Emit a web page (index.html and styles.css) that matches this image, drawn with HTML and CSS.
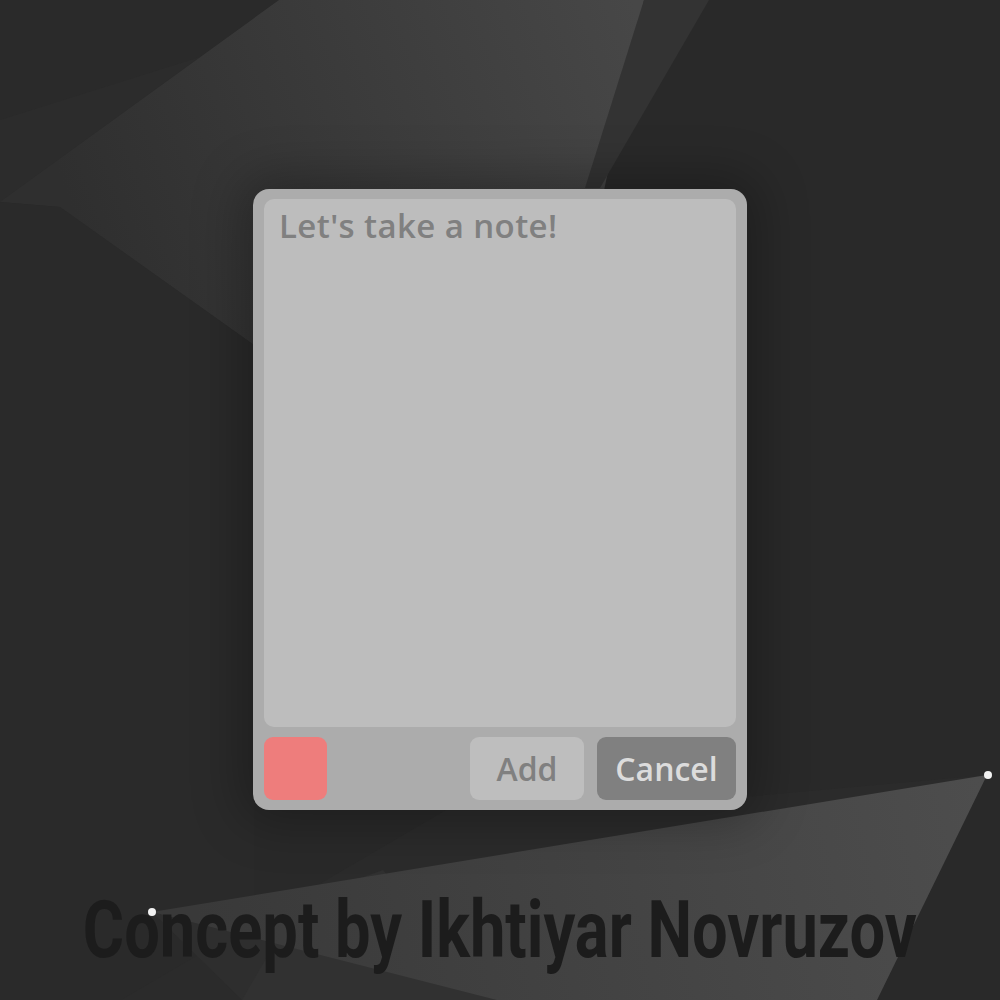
FILE: index.html
```html
<!DOCTYPE html>
<html lang="en">
<head>
<meta charset="utf-8">
<title>Note</title>
<link rel="stylesheet" href="styles.css">
</head>
<body>
<div class="stage">
  <svg class="bg" width="1000" height="1000" viewBox="0 0 1000 1000" aria-hidden="true">
    <defs>
      <linearGradient id="gTop" x1="640" y1="20" x2="80" y2="230" gradientUnits="userSpaceOnUse">
        <stop offset="0" stop-color="#474747"/>
        <stop offset="1" stop-color="#2f2f2f"/>
      </linearGradient>
      <linearGradient id="gBot" x1="980" y1="780" x2="200" y2="930" gradientUnits="userSpaceOnUse">
        <stop offset="0" stop-color="#4d4d4d"/>
        <stop offset="1" stop-color="#393939"/>
      </linearGradient>
    </defs>
    <rect width="1000" height="1000" fill="#292929"/>
    <polygon points="0,0 279,0 0,202" fill="#2a2a2a"/>
    <polygon points="0,120 200,57 0,202" fill="#2c2c2c"/>
    <polygon points="279,0 644,0 560,400 254,345 60,207 0,202" fill="url(#gTop)"/>
    <polygon points="644,0 709,0 600,188 585,188" fill="#333333"/>
    <polygon points="0,202 60,207 254,345 254,1000 0,1000" fill="#2a2a2a"/>
    <polygon points="446,810 600,810 987,775 877,1000 121,1000" fill="#2b2b2b"/>
    <polygon points="152,912 497,1000 242,1000" fill="#2e2e2e"/>
    <polygon points="383,870 497,1000 242,1000 300,900" fill="#313131"/>
    <polygon points="152,912 987,775 877,1000 497,1000" fill="url(#gBot)"/>
    <circle cx="152" cy="912" r="4" fill="#f2f2f2"/>
    <circle cx="988" cy="775" r="4" fill="#f2f2f2"/>
  </svg>

  <div class="content">
    <div class="card">
      <div class="note">Let's take a note!</div>
      <div class="actions">
        <div class="swatch"></div>
        <div class="spacer"></div>
        <div class="btn btn-add">Add</div>
        <div class="btn btn-cancel">Cancel</div>
      </div>
    </div>
    <div class="caption"><span class="caption-text">Concept by Ikhtiyar Novruzov</span></div>
  </div>
</div>
</body>
</html>
```

FILE: styles.css
```css
html, body {
  margin: 0;
  padding: 0;
  background: #292929;
}

.stage {
  position: relative;
  width: 1000px;
  height: 1000px;
  overflow: hidden;
  background: #292929;
}

.bg {
  position: absolute;
  left: 0;
  top: 0;
  display: block;
}

.content {
  position: relative;
  display: flex;
  flex-direction: column;
  align-items: center;
  padding-top: 189px;
}

.card {
  box-sizing: border-box;
  width: 494px;
  height: 621px;
  padding: 10px 11px;
  background: #acacac;
  border-radius: 16px;
  box-shadow: 0 0 50px 12px rgba(0, 0, 0, 0.28);
  display: flex;
  flex-direction: column;
  gap: 10px;
}

.note {
  flex: 0 0 528px;
  box-sizing: border-box;
  padding: 7px 15px;
  background: #bdbdbd;
  border-radius: 10px;
  font-family: "Open Sans", "Noto Sans", sans-serif;
  font-weight: 600;
  font-size: 33px;
  letter-spacing: 0.4px;
  line-height: 1.2;
  color: #808080;
}

.actions {
  display: flex;
  align-items: stretch;
  height: 63px;
  gap: 13px;
}

.swatch {
  width: 63px;
  background: #ee7d7c;
  border-radius: 9px;
}

.spacer {
  flex: 1;
}

.btn {
  display: flex;
  align-items: center;
  justify-content: center;
  border-radius: 9px;
  font-family: "Open Sans", "Noto Sans", sans-serif;
  font-weight: 600;
  font-size: 32px;
  line-height: 1;
}

.btn-add {
  width: 114px;
  background: #bebebe;
  color: #808080;
}

.btn-cancel {
  width: 139px;
  background: #808080;
  color: #dcdcdc;
}

.caption {
  margin-top: 80px;
  width: 1000px;
  display: flex;
  justify-content: center;
  white-space: nowrap;
}

.caption-text {
  display: inline-block;
  font-family: Roboto, "Liberation Sans", sans-serif;
  font-weight: 700;
  font-size: 80px;
  line-height: 80px;
  color: #1c1c1c;
  transform: scaleX(0.79);
  transform-origin: center;
}
```
